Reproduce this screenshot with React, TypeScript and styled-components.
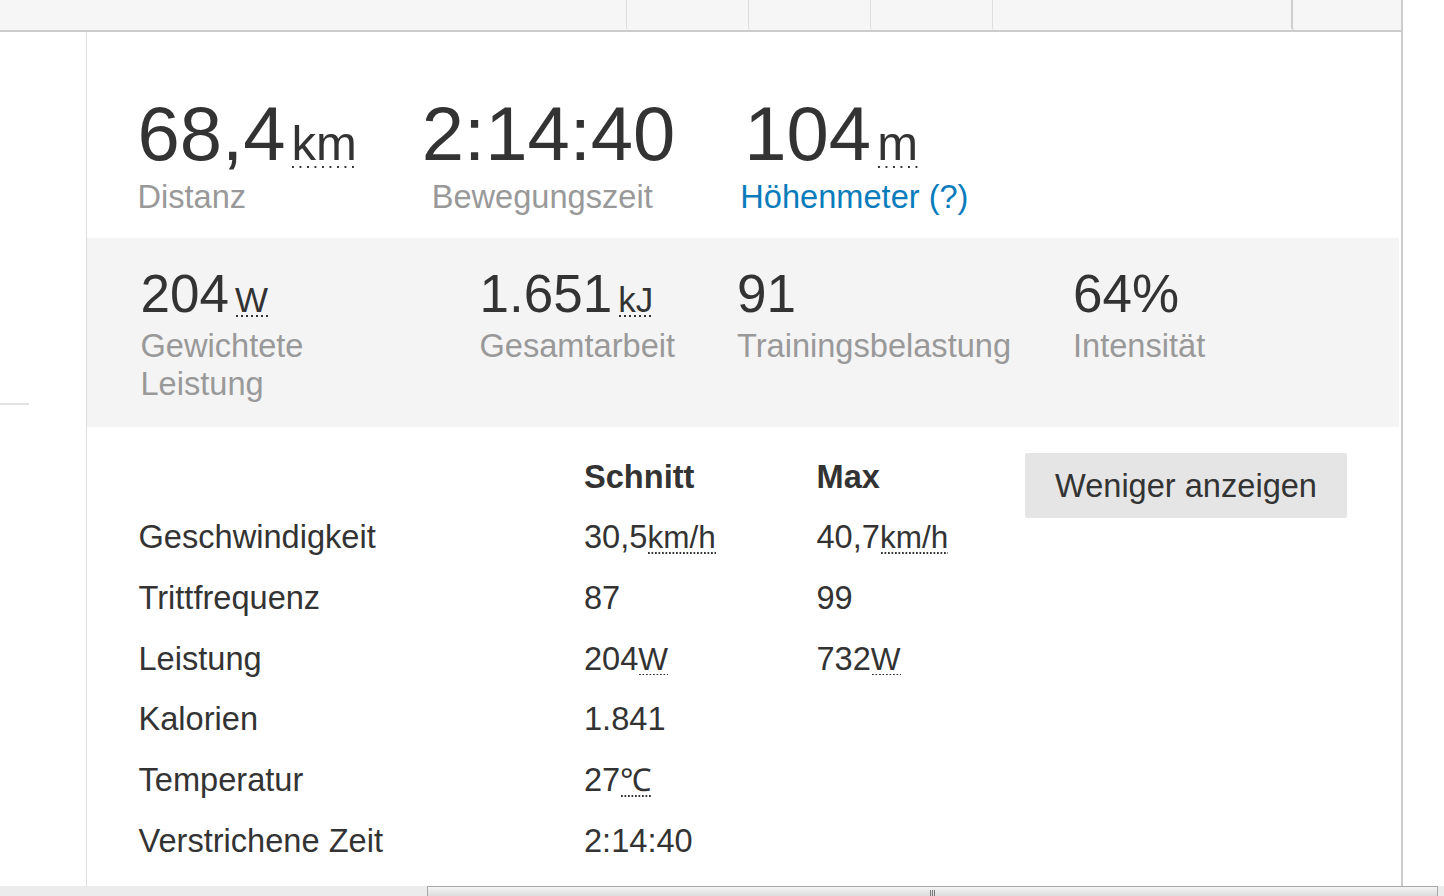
import React from 'react';
import styled, { createGlobalStyle } from 'styled-components';

const GlobalStyle = createGlobalStyle`
  html, body {
    margin: 0;
    padding: 0;
    background: #fff;
    overflow: hidden;
  }
  body {
    font-family: 'Liberation Sans', Arial, sans-serif;
    color: #333;
  }
`;

const Page = styled.div`
  height: 896px;
  display: flex;
  flex-direction: column;
`;

const FrameRow = styled.div`
  flex: 1;
  min-height: 0;
  display: flex;
`;

const Frame = styled.div`
  width: 1401px;
  border-right: 2px solid #ccc;
  display: flex;
  flex-direction: column;
`;

const TopBar = styled.div`
  height: 30px;
  background: #f6f6f6;
  border-bottom: 2px solid #ccc;
  display: grid;
  grid-template-columns: 626px 122px 122px 122px 299px 1fr;
`;

const Tab = styled.div<{ $edge?: 'none' | 'thin' | 'thick' }>`
  border-left: ${(p) =>
    p.$edge === 'none' ? '0' : p.$edge === 'thick' ? '2px solid #cfcfcf' : '1px solid #dedede'};
  border-bottom-left-radius: 3px;
`;

const Body = styled.div`
  flex: 1;
  min-height: 0;
  display: flex;
`;

const Sidebar = styled.div`
  width: 87px;
  border-right: 1px solid #dedede;
  padding-top: 371px;
  box-sizing: border-box;
`;

const SidebarRule = styled.div`
  width: 29px;
  height: 2px;
  background: #e2e2e2;
`;

const Content = styled.div`
  flex: 1;
  margin-right: 2px;
`;

const Summary = styled.ul`
  list-style: none;
  margin: 0;
  padding: 64px 52px 22px 50.5px;
  display: flex;
`;

const Stat = styled.li<{ $after: number }>`
  display: flex;
  flex-direction: column;
  margin-right: ${(p) => p.$after}px;
`;

const Value = styled.strong<{ $size: number }>`
  font-weight: normal;
  font-size: ${(p) => p.$size}px;
  line-height: 1;
  color: #333;
  white-space: nowrap;
`;

const Unit = styled.abbr<{ $size: number; $gap: number; $dot: number; $period: number; $thick: number }>`
  display: inline-block;
  font-size: ${(p) => p.$size}px;
  line-height: 1;
  margin-left: ${(p) => p.$gap}px;
  text-decoration: none;
  background-image: linear-gradient(to right, #333 ${(p) => p.$dot}px, transparent ${(p) => p.$dot}px);
  background-size: ${(p) => p.$period}px ${(p) => p.$thick}px;
  background-repeat: repeat-x;
  background-position: 1px 100%;
`;

const Label = styled.span<{ $link?: boolean; $indent?: number }>`
  margin-top: 5.7px;
  margin-left: ${(p) => p.$indent ?? 0}px;
  font-size: 32.6px;
  line-height: 38.4px;
  color: ${(p) => (p.$link ? '#0a7cbc' : '#999')};
  white-space: nowrap;
`;

const Band = styled.ul`
  list-style: none;
  margin: 0;
  background: #f4f4f4;
  padding: 29px 0 23.5px 53.5px;
  display: grid;
  grid-template-columns: 339px 257.5px 336px 1fr;
`;

const BandStat = styled.li`
  display: flex;
  flex-direction: column;
  padding-right: 58px;
`;

const BandLabel = styled(Label)`
  margin-top: 6.7px;
  white-space: normal;
`;

const Details = styled.div`
  display: flex;
  align-items: flex-start;
  padding: 19.5px 52px 0 51.5px;
`;

const Table = styled.div`
  flex: 1;
  display: grid;
  grid-template-columns: 445.5px 232.5px 1fr;
`;

const Cell = styled.div<{ $head?: boolean }>`
  padding: 11px 0;
  font-size: 32.6px;
  line-height: 38.7px;
  font-weight: ${(p) => (p.$head ? 'bold' : 'normal')};
  color: #333;
  white-space: nowrap;
`;

const ToggleButton = styled.button`
  margin-top: 6.5px;
  width: 322px;
  height: 65px;
  border: 0;
  border-radius: 2px;
  background: #e5e5e5;
  color: #333;
  font-family: inherit;
  font-size: 32.6px;
  padding: 0;
  cursor: pointer;
`;

const Remainder = styled.div`
  flex: 1;
`;

const ScrollTrack = styled.div`
  height: 10px;
  background: #ececec;
  display: flex;
  padding-left: 427px;
  padding-right: 6px;
`;

const ScrollThumb = styled.div`
  flex: 1;
  box-sizing: border-box;
  border: 1px solid #a8a8a8;
  border-bottom: 0;
  background: linear-gradient(#f4f4f4, #dcdcdc);
  display: flex;
  justify-content: center;
  align-items: flex-end;
`;

const Grip = styled.div`
  width: 5px;
  height: 6px;
  background: repeating-linear-gradient(to right, #777 0 1px, transparent 1px 2px);
`;

type U = { size: number; gap: number; dot: number; period: number; thick: number };

const topUnit: U = { size: 49, gap: 6, dot: 2, period: 7.5, thick: 2 };
const bandUnit: U = { size: 35, gap: 6, dot: 2, period: 5, thick: 2 };
const rowUnit: U = { size: 31.5, gap: 0, dot: 1.5, period: 3.5, thick: 1.5 };

const UnitTag: React.FC<{ u: U; children: React.ReactNode }> = ({ u, children }) => (
  <Unit $size={u.size} $gap={u.gap} $dot={u.dot} $period={u.period} $thick={u.thick}>
    {children}
  </Unit>
);

const summary = [
  { value: '68,4', unit: 'km', label: 'Distanz', after: 65 },
  { value: '2:14:40', label: 'Bewegungszeit', indent: 10, after: 69 },
  { value: '104', unit: 'm', label: 'Höhenmeter (?)', link: true, indent: -4, after: 0 },
];

const band = [
  { value: '204', unit: 'W', label: 'Gewichtete Leistung' },
  { value: '1.651', unit: 'kJ', label: 'Gesamtarbeit' },
  { value: '91', label: 'Trainingsbelastung' },
  { value: '64%', label: 'Intensität' },
];

const rows: { label: string; avg: string; avgUnit?: string; max?: string; maxUnit?: string }[] = [
  { label: 'Geschwindigkeit', avg: '30,5', avgUnit: 'km/h', max: '40,7', maxUnit: 'km/h' },
  { label: 'Trittfrequenz', avg: '87', max: '99' },
  { label: 'Leistung', avg: '204', avgUnit: 'W', max: '732', maxUnit: 'W' },
  { label: 'Kalorien', avg: '1.841' },
  { label: 'Temperatur', avg: '27', avgUnit: '℃' },
  { label: 'Verstrichene Zeit', avg: '2:14:40' },
];

const App: React.FC = () => {
  return (
    <Page>
      <GlobalStyle />
      <FrameRow>
        <Frame>
          <TopBar>
            <Tab $edge="none" />
            <Tab />
            <Tab />
            <Tab />
            <Tab />
            <Tab $edge="thick" />
          </TopBar>
          <Body>
            <Sidebar>
              <SidebarRule />
            </Sidebar>
            <Content>
              <Summary>
                {summary.map((s) => (
                  <Stat key={s.label} $after={s.after}>
                    <Value $size={76}>
                      {s.value}
                      {s.unit && <UnitTag u={topUnit}>{s.unit}</UnitTag>}
                    </Value>
                    <Label $link={s.link} $indent={s.indent}>
                      {s.label}
                    </Label>
                  </Stat>
                ))}
              </Summary>

              <Band>
                {band.map((s) => (
                  <BandStat key={s.label}>
                    <Value $size={53}>
                      {s.value}
                      {s.unit && <UnitTag u={bandUnit}>{s.unit}</UnitTag>}
                    </Value>
                    <BandLabel>{s.label}</BandLabel>
                  </BandStat>
                ))}
              </Band>

              <Details>
                <Table>
                  <Cell />
                  <Cell $head>Schnitt</Cell>
                  <Cell $head>Max</Cell>
                  {rows.map((r) => (
                    <React.Fragment key={r.label}>
                      <Cell>{r.label}</Cell>
                      <Cell>
                        {r.avg}
                        {r.avgUnit && <UnitTag u={rowUnit}>{r.avgUnit}</UnitTag>}
                      </Cell>
                      <Cell>
                        {r.max}
                        {r.maxUnit && <UnitTag u={rowUnit}>{r.maxUnit}</UnitTag>}
                      </Cell>
                    </React.Fragment>
                  ))}
                </Table>
                <ToggleButton>Weniger anzeigen</ToggleButton>
              </Details>
            </Content>
          </Body>
        </Frame>
        <Remainder />
      </FrameRow>
      <ScrollTrack>
        <ScrollThumb>
          <Grip />
        </ScrollThumb>
      </ScrollTrack>
    </Page>
  );
};

export default App;
